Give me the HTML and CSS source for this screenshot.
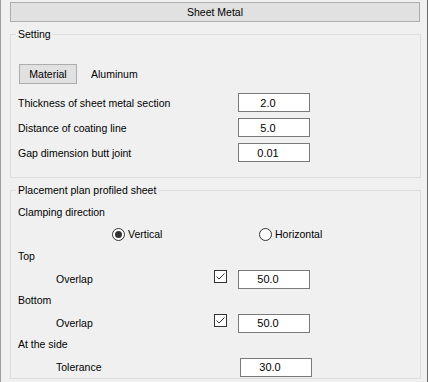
FILE: index.html
```html
<!DOCTYPE html>
<html lang="en">
<head>
    <meta charset="UTF-8">
    <meta name="viewport" content="width=device-width, initial-scale=1.0">
    <title>Sheet Metal</title>
    <link rel="stylesheet" href="styles.css">
</head>
<body>
    <div class="window">
        <button class="title-btn">Sheet Metal</button>

        <!-- Setting group -->
        <fieldset class="group group-setting">
            <legend>Setting</legend>
            <div class="material-row">
                <button class="btn">Material</button>
                <span class="material-name">Aluminum</span>
            </div>
            <div class="setting-grid">
                <label>Thickness of sheet metal section</label>
                <input class="field" type="text" value="2.0" readonly>
                <label>Distance of coating line</label>
                <input class="field" type="text" value="5.0" readonly>
                <label>Gap dimension butt joint</label>
                <input class="field" type="text" value="0.01" readonly>
            </div>
        </fieldset>

        <!-- Placement group -->
        <fieldset class="group group-place">
            <legend>Placement plan profiled sheet</legend>
            <div class="line">Clamping direction</div>
            <div class="line radio-line">
                <span class="option"><span class="radio checked"></span>Vertical</span>
                <span class="option"><span class="radio"></span>Horizontal</span>
            </div>
            <div class="line">Top</div>
            <div class="line line-field">
                <span class="sub">Overlap</span>
                <span class="check">
                    <svg width="11" height="11" viewBox="0 0 11 11"><path d="M1.5 5.5 L4 8 L9.5 2.5" fill="none" stroke="#333" stroke-width="1"/></svg>
                </span>
                <input class="field" type="text" value="50.0" readonly>
            </div>
            <div class="line">Bottom</div>
            <div class="line line-field">
                <span class="sub">Overlap</span>
                <span class="check">
                    <svg width="11" height="11" viewBox="0 0 11 11"><path d="M1.5 5.5 L4 8 L9.5 2.5" fill="none" stroke="#333" stroke-width="1"/></svg>
                </span>
                <input class="field" type="text" value="50.0" readonly>
            </div>
            <div class="line">At the side</div>
            <div class="line line-field line-tol">
                <span class="sub">Tolerance</span>
                <input class="field" type="text" value="30.0" readonly>
            </div>
        </fieldset>
    </div>
</body>
</html>
```

FILE: styles.css
```css
/* Dialog styles */
* {
    margin: 0;
    padding: 0;
    box-sizing: border-box;
}

body {
    background-color: #f0f0f0;
    font-family: "Liberation Sans", Arial, sans-serif;
    font-size: 10.5px;
    color: #000;
}

.window {
    width: 428px;
    height: 382px;
    padding-top: 2px;
    border-left: 1px solid #a0a0a0;
    border-right: 1px solid #6a6a6a;
    overflow: hidden;
}

button {
    font-family: inherit;
    font-size: inherit;
    color: #000;
    background-color: #e1e1e1;
    border: 1px solid #adadad;
}

.title-btn {
    display: block;
    width: 410px;
    height: 20px;
    margin-left: 9px;
}

/* Group boxes */
.group {
    width: 411px;
    margin: 5px 0 0 9px;
    border: 1px solid #dcdcdc;
    padding: 0 7px;
    min-inline-size: 0;
}

.group legend {
    padding: 0 2px;
    margin-left: -2px;
    line-height: 15px;
}

.group-setting {
    padding-top: 22px;
    padding-bottom: 15px;
}

.material-row {
    display: flex;
    align-items: center;
    height: 20px;
}

.btn {
    width: 58px;
    height: 20px;
    margin-left: 1px;
}

.material-name {
    margin-left: 14px;
}

.setting-grid {
    display: grid;
    grid-template-columns: 220px 72px;
    grid-auto-rows: 19px;
    row-gap: 6px;
    align-items: center;
    margin-top: 9px;
}

.field {
    width: 72px;
    height: 19px;
    border: 1px solid #7a7a7a;
    background-color: #fff;
    font-family: inherit;
    font-size: 11px;
    color: #000;
    text-align: center;
    padding: 0 12px 0 0;
    outline: none;
}

.group-place {
    padding-top: 3px;
    padding-bottom: 1px;
}

.line {
    display: flex;
    align-items: center;
    height: 22px;
}

.line-field {
    padding-top: 2px;
}

.radio-line {
    padding-left: 94px;
}

.option {
    display: flex;
    align-items: center;
    width: 147px;
}

.radio {
    width: 13px;
    height: 13px;
    margin-right: 3px;
    border: 1px solid #333;
    border-radius: 50%;
    background-color: #fff;
    display: flex;
    align-items: center;
    justify-content: center;
}

.radio.checked::after {
    content: "";
    width: 7px;
    height: 7px;
    border-radius: 50%;
    background-color: #333;
}

.sub {
    width: 196px;
    padding-left: 38px;
}

.check {
    width: 13px;
    height: 13px;
    margin-right: 11px;
    border: 1px solid #333;
    background-color: #fff;
    align-self: flex-start;
    margin-top: 1px;
    display: flex;
}

.line-tol .sub {
    width: 222px;
}
```
